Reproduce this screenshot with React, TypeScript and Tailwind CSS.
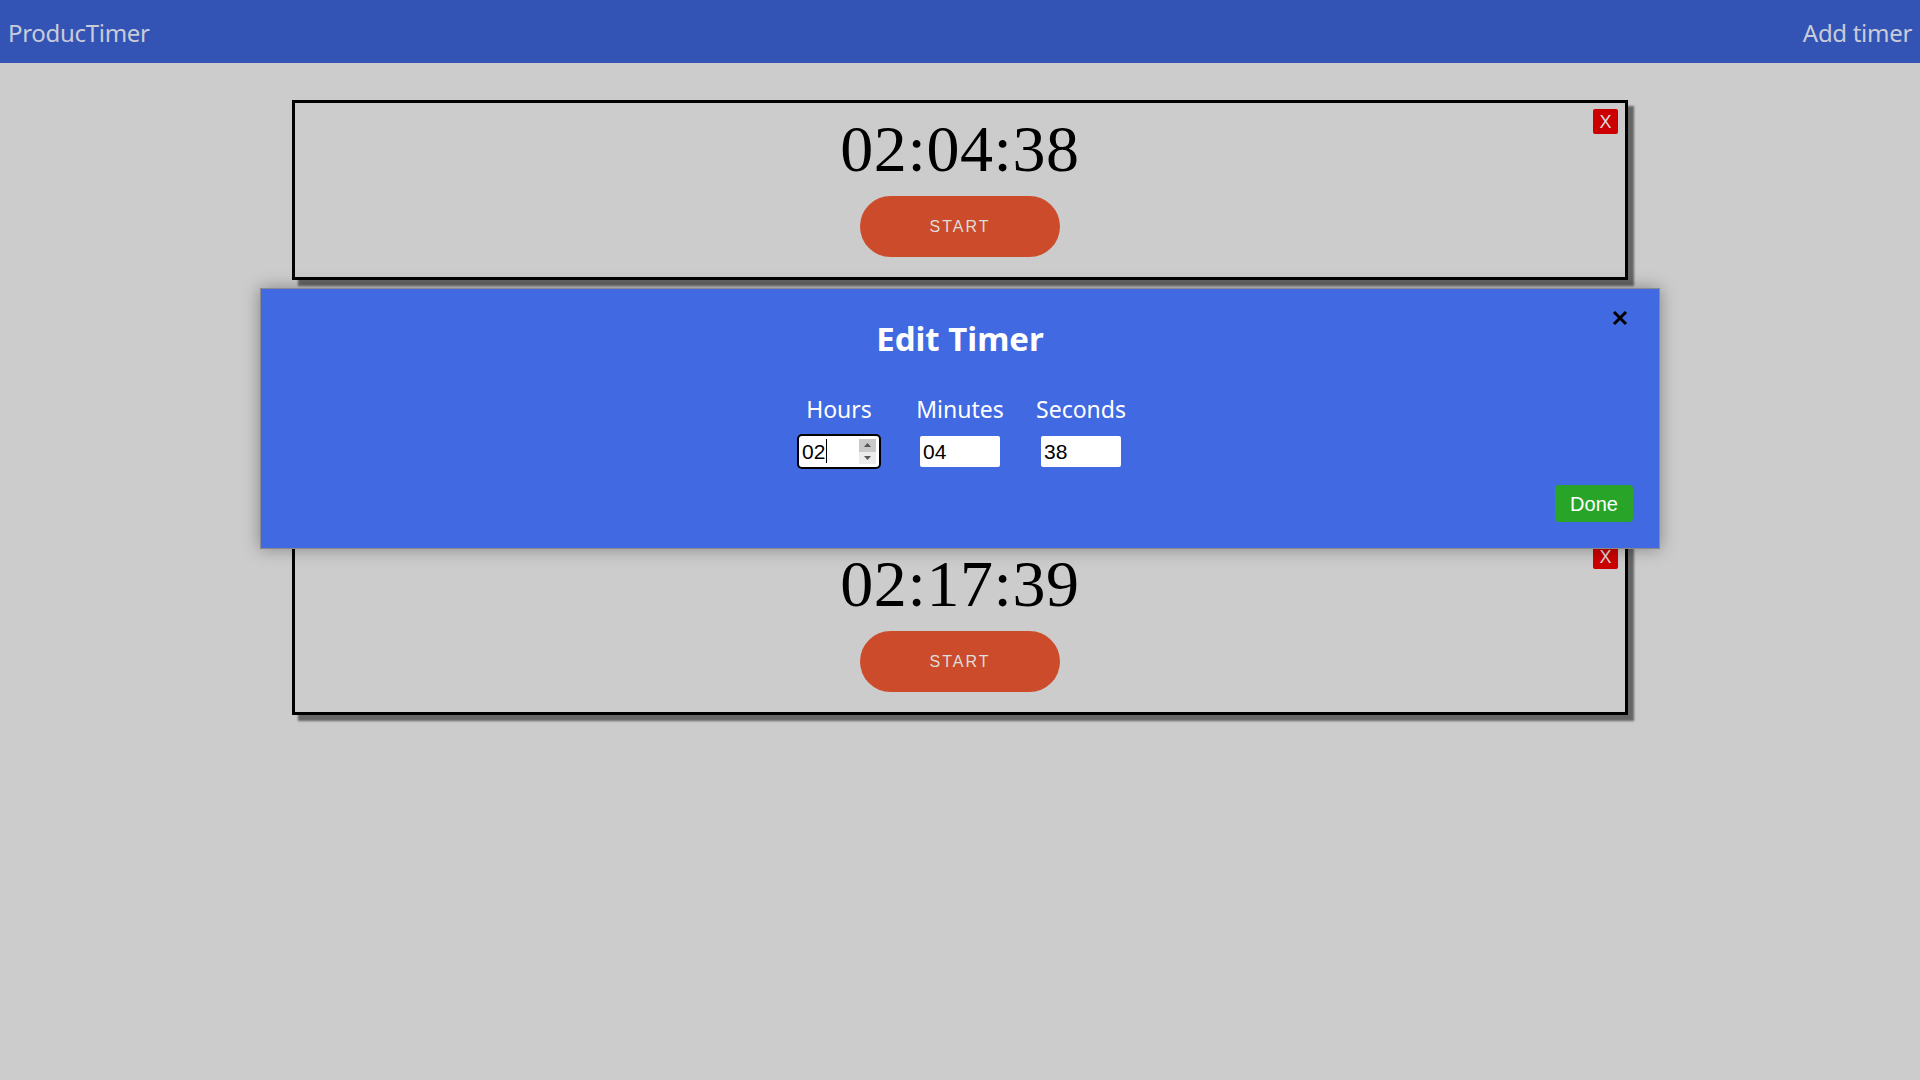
import React from 'react';

const TimerCard: React.FC<{ time: string; className?: string }> = ({ time, className = "" }) => (
    <div className={`relative w-[1336px] h-[180px] border-[3px] border-black bg-[#cccccc] shadow-[6px_6px_2px_rgba(0,0,0,0.5)] flex flex-col items-center pt-[13px] ${className}`}>
        <div className="text-[66px] leading-none tracking-[0.6px] text-black h-[66px]" style={{ fontFamily: '"Liberation Serif", serif' }}>
            {time}
        </div>
        <button className="mt-[14px] w-[200px] h-[61px] rounded-full bg-[#cc4b2a] text-[#dedede] text-[16px] tracking-[2px] font-['Liberation_Sans',sans-serif]">
            START
        </button>
        <button className="absolute top-[6px] right-[7px] w-[25px] h-[25px] rounded-[2px] bg-[#cc0000] text-[#dddddd] text-[18px] leading-none flex items-center justify-center font-['Liberation_Sans',sans-serif]">
            X
        </button>
    </div>
);

const Field: React.FC<{ label: string; value: string; focused?: boolean }> = ({ label, value, focused = false }) => (
    <div className="w-[80px] flex flex-col items-center">
        <div className="text-[23px] leading-none h-[22px] text-white whitespace-nowrap">{label}</div>
        <div className={`relative mt-[16px] w-[80px] h-[31px] bg-white ${focused ? 'rounded-[3px] ring-2 ring-black' : 'rounded-[2px]'}`}>
            <input
                readOnly
                value={value}
                className="w-full h-full bg-transparent pl-[3px] text-[21px] text-black outline-none font-['Liberation_Sans',sans-serif]"
            />
            {focused && (
                <>
                    <div className="absolute left-[27px] top-[3px] w-px h-[24px] bg-black" />
                    <div className="absolute right-[3px] top-[3px] w-[17px] h-[25px] flex flex-col">
                        <div className="flex-1 bg-[#c9c9c9] flex items-center justify-center">
                            <svg width="7" height="4" viewBox="0 0 7 4"><path d="M0 4 L3.5 0 L7 4 Z" fill="#555" /></svg>
                        </div>
                        <div className="flex-1 bg-[#ececec] flex items-center justify-center">
                            <svg width="7" height="4" viewBox="0 0 7 4"><path d="M0 0 L3.5 4 L7 0 Z" fill="#555" /></svg>
                        </div>
                    </div>
                </>
            )}
        </div>
    </div>
);

export default function App() {
    return (
        <div className="relative min-h-screen bg-[#cccccc] font-['Noto_Sans',sans-serif]">
            <header className="h-[63px] bg-[#3354b4] flex items-center justify-between px-[8px] pt-[2px] text-[24px] tracking-[-0.3px] text-[#c9ccd8]">
                <span>ProducTimer</span>
                <span>Add timer</span>
            </header>

            <div className="flex flex-col items-center pt-[37px]">
                <TimerCard time="02:04:38" />
                <TimerCard time="02:17:39" className="mt-[255px]" />
            </div>

            {/* edit modal */}
            <div className="absolute top-[288px] left-1/2 -translate-x-1/2 w-[1400px] h-[261px] bg-[#4169e1] border border-[#8a8a8a] shadow-[0_0_16px_rgba(0,0,0,0.35)] flex flex-col items-center pt-[33px]">
                <h2 className="text-[33px] leading-none h-[34px] font-bold text-white">Edit Timer</h2>
                <button className="absolute top-[20px] right-[30px] w-[18px] h-[18px] flex items-center justify-center">
                    <svg width="16" height="16" viewBox="0 0 16 16">
                        <path d="M2 2 L14 14 M14 2 L2 14" stroke="#000" strokeWidth="3" />
                    </svg>
                </button>
                <div className="mt-[42px] flex gap-[41px]">
                    <Field label="Hours" value="02" focused />
                    <Field label="Minutes" value="04" />
                    <Field label="Seconds" value="38" />
                </div>
                <div className="w-full flex justify-end pr-[26px] mt-[18px]">
                    <button className="w-[78px] h-[37px] rounded-[4px] bg-[#28a428] text-white text-[20px] font-['Liberation_Sans',sans-serif]">
                        Done
                    </button>
                </div>
            </div>
        </div>
    );
}
